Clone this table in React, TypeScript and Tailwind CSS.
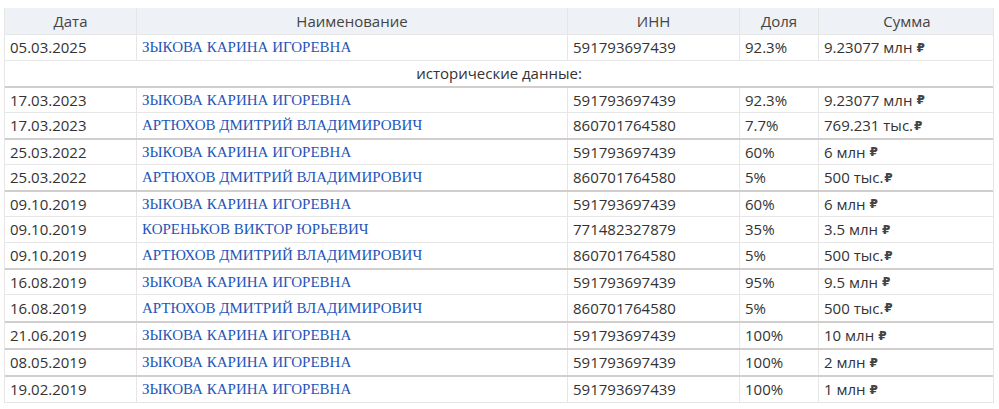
import React from 'react';

type Row = { date: string; name: string; inn: string; share: string; sum: string; gap?: boolean; thick?: boolean; tall?: boolean };

const rows: Row[] = [
  { date: '17.03.2023', name: 'ЗЫКОВА КАРИНА ИГОРЕВНА', inn: '591793697439', share: '92.3%', sum: '9.23077 млн', gap: true, thick: true },
  { date: '17.03.2023', name: 'АРТЮХОВ ДМИТРИЙ ВЛАДИМИРОВИЧ', inn: '860701764580', share: '7.7%', sum: '769.231 тыс.' },
  { date: '25.03.2022', name: 'ЗЫКОВА КАРИНА ИГОРЕВНА', inn: '591793697439', share: '60%', sum: '6 млн', gap: true, thick: true },
  { date: '25.03.2022', name: 'АРТЮХОВ ДМИТРИЙ ВЛАДИМИРОВИЧ', inn: '860701764580', share: '5%', sum: '500 тыс.' },
  { date: '09.10.2019', name: 'ЗЫКОВА КАРИНА ИГОРЕВНА', inn: '591793697439', share: '60%', sum: '6 млн', gap: true, thick: true },
  { date: '09.10.2019', name: 'КОРЕНЬКОВ ВИКТОР ЮРЬЕВИЧ', inn: '771482327879', share: '35%', sum: '3.5 млн', gap: true },
  { date: '09.10.2019', name: 'АРТЮХОВ ДМИТРИЙ ВЛАДИМИРОВИЧ', inn: '860701764580', share: '5%', sum: '500 тыс.' },
  { date: '16.08.2019', name: 'ЗЫКОВА КАРИНА ИГОРЕВНА', inn: '591793697439', share: '95%', sum: '9.5 млн', gap: true, thick: true },
  { date: '16.08.2019', name: 'АРТЮХОВ ДМИТРИЙ ВЛАДИМИРОВИЧ', inn: '860701764580', share: '5%', sum: '500 тыс.', tall: true },
  { date: '21.06.2019', name: 'ЗЫКОВА КАРИНА ИГОРЕВНА', inn: '591793697439', share: '100%', sum: '10 млн', gap: true, thick: true, tall: true },
  { date: '08.05.2019', name: 'ЗЫКОВА КАРИНА ИГОРЕВНА', inn: '591793697439', share: '100%', sum: '2 млн', gap: true, thick: true, tall: true },
  { date: '19.02.2019', name: 'ЗЫКОВА КАРИНА ИГОРЕВНА', inn: '591793697439', share: '100%', sum: '1 млн', gap: true, thick: true, tall: true },
];

const cols = 'grid grid-cols-[132px_431px_172px_79px_176px]';
const cell = 'px-[5px] flex items-center border-r border-[#e6e6e6] last:border-r-0 whitespace-nowrap';

const DataRow = ({ r }: { r: Row }) => (
  <div className={`${cols} ${r.tall ? 'h-[27px]' : 'h-[26px]'} ${r.thick ? 'border-t-2 border-[#d2cece]' : 'border-t border-[#e6e6e6]'}`}>
    <div className={cell}>{r.date}</div>
    <div className={cell}>
      <a href="#" className="text-[#1f55b8] text-[15px]" style={{ fontFamily: '"Liberation Serif", serif' }}>{r.name}</a>
    </div>
    <div className={cell}>{r.inn}</div>
    <div className={cell}>{r.share}</div>
    <div className={cell}>
      {r.sum}
      <span className={`text-[12px] font-semibold text-[#444] ${r.gap ? 'ml-[4px]' : 'ml-[1px]'}`} style={{ fontFamily: '"DejaVu Sans", sans-serif' }}>₽</span>
    </div>
  </div>
);

export default function App() {
  return (
    <div className="w-[999px] h-[409px] bg-white overflow-hidden pt-[8px] pl-[4px]" style={{ fontFamily: '"Open Sans", sans-serif' }}>
      <div className="w-[990px] border-x border-[#e6e6e6] text-[15px] text-[#333]">
        <div className={`${cols} h-[26px] bg-[#eef1f5] text-[#444]`}>
          {['Дата', 'Наименование', 'ИНН', 'Доля', 'Сумма'].map(h => (
            <div key={h} className="flex items-center justify-center border-r border-[#e6e6e6] last:border-r-0">{h}</div>
          ))}
        </div>
        <DataRow r={{ date: '05.03.2025', name: 'ЗЫКОВА КАРИНА ИГОРЕВНА', inn: '591793697439', share: '92.3%', sum: '9.23077 млн', gap: true }} />
        <div className="h-[26px] border-t border-[#e6e6e6] flex items-center justify-center">исторические данные:</div>
        {rows.map((r, i) => <DataRow key={i} r={r} />)}
        <div className="border-t border-[#e6e6e6]" />
      </div>
    </div>
  );
}
